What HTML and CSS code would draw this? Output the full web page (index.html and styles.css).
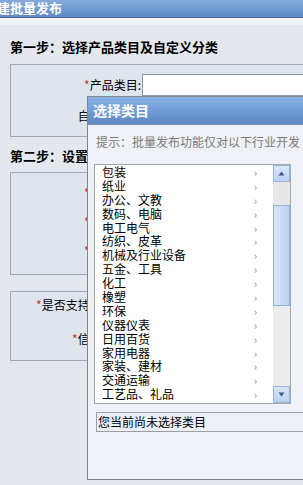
FILE: index.html
```html
<!DOCTYPE html>
<html lang="zh-CN">
<head>
<meta charset="utf-8">
<title>批量发布</title>
<link rel="stylesheet" href="styles.css">
</head>
<body>
<div class="topbar"><span class="topbar-title">建批量发布</span></div>
<div class="band"></div>
<main class="main">
  <h2 class="step step-first">第一步：选择产品类目及自定义分类</h2>
  <section class="box box-one">
    <div class="row"><label class="lbl"><span class="req">*</span>产品类目:</label><span class="input"></span></div>
    <div class="row"><label class="lbl">自定义分类:</label><span class="input"></span></div>
  </section>
  <h2 class="step">第二步：设置批量发布信息</h2>
  <section class="box box-two">
    <div class="row"><label class="lbl"><span class="req">*</span>产品名称:</label><span class="input"></span></div>
    <div class="row"><label class="lbl"><span class="req">*</span>产品数量:</label><span class="input"></span></div>
    <div class="row"><label class="lbl"><span class="req">*</span>产品单价:</label><span class="input"></span></div>
  </section>
  <section class="box box-three">
    <div class="row"><label class="lbl"><span class="req">*</span>是否支持网上订购:</label><span class="input"></span></div>
    <div class="row"><label class="lbl"><span class="req">*</span>信息有效期:</label><span class="input"></span></div>
  </section>
</main>

<div class="dialog">
  <div class="dialog-head">选择类目</div>
  <p class="hint">提示：批量发布功能仅对以下行业开发</p>
  <div class="listbox">
    <ul class="cats">
      <li><span>包装</span><i>›</i></li>
      <li><span>纸业</span><i>›</i></li>
      <li><span>办公、文教</span><i>›</i></li>
      <li><span>数码、电脑</span><i>›</i></li>
      <li><span>电工电气</span><i>›</i></li>
      <li><span>纺织、皮革</span><i>›</i></li>
      <li><span>机械及行业设备</span><i>›</i></li>
      <li><span>五金、工具</span><i>›</i></li>
      <li><span>化工</span><i>›</i></li>
      <li><span>橡塑</span><i>›</i></li>
      <li><span>环保</span><i>›</i></li>
      <li><span>仪器仪表</span><i>›</i></li>
      <li><span>日用百货</span><i>›</i></li>
      <li><span>家用电器</span><i>›</i></li>
      <li><span>家装、建材</span><i>›</i></li>
      <li><span>交通运输</span><i>›</i></li>
      <li><span>工艺品、礼品</span><i>›</i></li>
    </ul>
    <div class="sbar">
      <div class="sbtn"><svg width="7" height="5" viewBox="0 0 7 5"><path d="M3.5 0.5 L6.5 4.5 L0.5 4.5 Z" fill="#3f5a86"/></svg></div>
      <div class="strack strack-top"></div>
      <div class="sthumb"></div>
      <div class="strack strack-bottom"></div>
      <div class="sbtn"><svg width="7" height="5" viewBox="0 0 7 5"><path d="M0.5 0.5 L6.5 0.5 L3.5 4.5 Z" fill="#3f5a86"/></svg></div>
    </div>
  </div>
  <div class="status">您当前尚未选择类目</div>
</div>
</body>
</html>
```
FILE: styles.css
```css
html, body {
  margin: 0;
  padding: 0;
  overflow: hidden;
}
body {
  position: relative;
  width: 303px;
  height: 485px;
  background: #e4e8ee;
  font-family: "Noto Sans CJK SC", "Noto Sans", sans-serif;
  font-size: 12px;
  color: #000;
}
.topbar {
  height: 17px;
  border-bottom: 1px solid #4d6f99;
  background: linear-gradient(#86acdc, #5c88c4);
  overflow: hidden;
}
.topbar-title {
  display: block;
  margin-left: -3px;
  color: #fff;
  font-weight: bold;
  font-size: 13px;
  line-height: 16px;
}
.band {
  height: 7px;
  background: #eef1f6;
}
.main {
  width: 420px;
  padding: 0 10px;
}
.step {
  margin: 11px 0 8px;
  font-size: 13px;
  font-weight: bold;
  line-height: 16px;
  white-space: nowrap;
}
.step-first {
  margin-top: 14px;
  margin-bottom: 9px;
}
.box {
  border: 1px solid #9ea7b2;
  background: #dfe5ed;
  display: flex;
  flex-direction: column;
}
.box-one {
  padding: 9px 0;
  gap: 9px;
}
.box-two {
  padding: 9px 0 12px;
  gap: 7px;
}
.box-three {
  margin-top: 16px;
  padding: 2px 0 10px;
  gap: 12px;
}
.row {
  display: flex;
  align-items: center;
  height: 22px;
}
.lbl {
  width: 130px;
  text-align: right;
  line-height: 14px;
  white-space: nowrap;
  margin-right: 1px;
}
.req {
  color: #d0262a;
}
.input {
  width: 220px;
  height: 20px;
  border: 1px solid #8f9aa6;
  background: #fff;
}
.dialog {
  position: absolute;
  left: 87px;
  top: 96px;
  width: 240px;
  height: 382px;
  border: 1px solid #7e8791;
  background: #eef1f5;
}
.dialog-head {
  height: 27px;
  border-bottom: 1px solid #7f95b3;
  background: linear-gradient(#8ab3e8, #5b87c3);
  color: #fff;
  font-size: 14px;
  font-weight: bold;
  line-height: 27px;
  padding-left: 5px;
}
.hint {
  margin: 9px 0 14px 8px;
  color: #7b7b7b;
  font-size: 12px;
  line-height: 16px;
  white-space: nowrap;
}
.listbox {
  margin-left: 6px;
  width: 195px;
  height: 238px;
  border: 1px solid #a4a8ad;
  background: #fff;
  display: flex;
}
.cats {
  list-style: none;
  margin: 0;
  padding: 0;
  flex: 1;
}
.cats li {
  display: flex;
  justify-content: space-between;
  align-items: center;
  height: 13.9px;
  line-height: 14px;
  padding: 0 16px 0 7px;
  white-space: nowrap;
}
.cats i {
  font-style: normal;
  color: #8a8a8a;
  font-size: 11px;
}
.sbar {
  width: 17px;
  display: flex;
  flex-direction: column;
  background: #ececec;
}
.sbtn {
  height: 15px;
  border: 1px solid #98b1d6;
  background: linear-gradient(#d8e6f8, #b9d0ef);
  display: flex;
  align-items: center;
  justify-content: center;
}
.strack-top {
  height: 23px;
  background: #e7e7e7;
}
.sthumb {
  height: 99px;
  border: 1px solid #95afd4;
  background: linear-gradient(90deg, #d6e5f8, #bdd3f0);
}
.strack-bottom {
  flex: 1;
  background: #ececec;
}
.status {
  margin: 8px 0 0 8px;
  height: 18px;
  border: 1px solid #9ba0a6;
  background: #eceff3;
  line-height: 18px;
  padding-left: 1px;
  white-space: nowrap;
}
```
